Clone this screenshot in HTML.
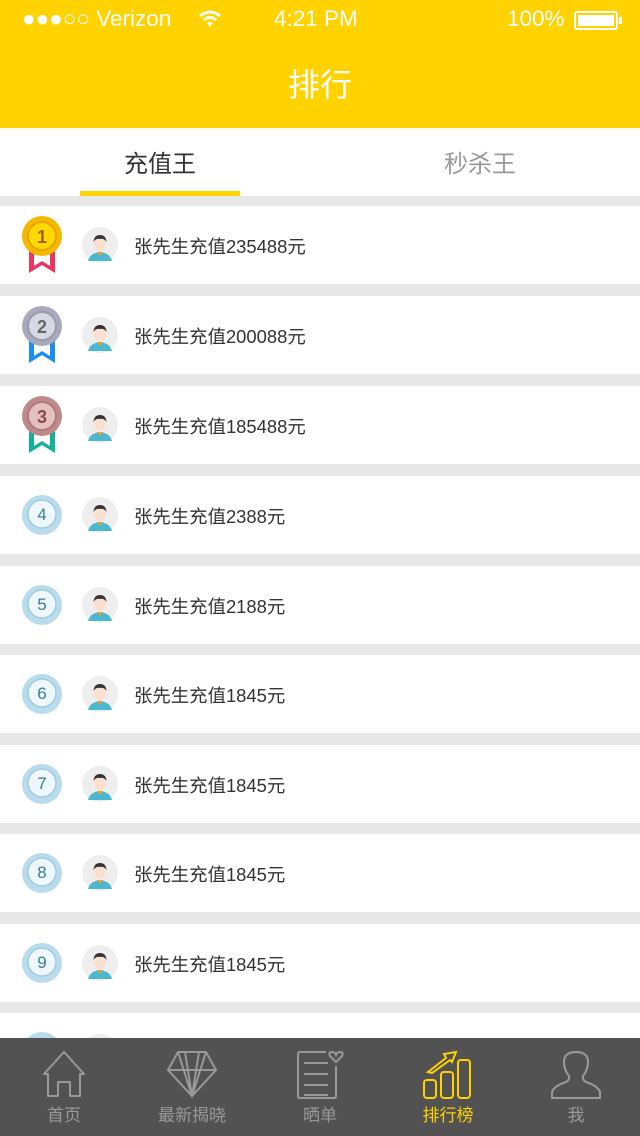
<!DOCTYPE html>
<html><head><meta charset="utf-8"><style>
*{margin:0;padding:0;box-sizing:border-box}
body{width:640px;height:1136px;overflow:hidden;background:#e8e8e8;font-family:"Liberation Sans","Noto Sans CJK SC",sans-serif;position:relative}
.hdr{position:absolute;left:0;top:0;width:640px;height:128px;background:#ffd200;color:#fff}
.sb{position:absolute;top:6px;font-size:22.5px}
.title{position:absolute;top:60px;width:100%;text-align:center;font-size:32px}
.tabs{position:absolute;top:128px;left:0;width:640px;height:68px;background:#fff}
.tab{position:absolute;top:16px;font-size:24px;width:320px;text-align:center}
.ul{position:absolute;left:80px;top:63px;width:160px;height:5px;background:#ffd200}
.row{position:absolute;left:0;width:640px;height:78px;background:#fff}
.txt{position:absolute;left:134px;top:27px;font-size:18.4px;color:#333}
.av{position:absolute;left:82px;top:21px}
.badge{position:absolute;left:21px;top:18px}
.bar{position:absolute;left:0;top:1038px;width:640px;height:98px;background:#525252}
.it{position:absolute;top:63px;width:128px;text-align:center;font-size:17px;color:#999}
.ic{position:absolute;top:12px}
</style></head><body>
<div class="hdr">
 <div class="sb" style="left:22px">●●●○○ Verizon</div>
 <svg style="position:absolute;left:198px;top:9px" width="24" height="20" viewBox="0 0 24 20"><path d="M2 7 Q12 -1 22 7" stroke="#fff" stroke-width="3" fill="none"/><path d="M6 11 Q12 6 18 11" stroke="#fff" stroke-width="3" fill="none"/><path d="M12 18 L9 14 Q12 12 15 14Z" fill="#fff"/></svg>
 <div class="sb" style="left:274px">4:21 PM</div>
 <div class="sb" style="left:507px">100%</div>
 <div style="position:absolute;left:574px;top:11px;width:44px;height:19px;border:2px solid #fff;border-radius:3px;padding:2px"><div style="background:#fff;width:100%;height:100%"></div></div>
 <div style="position:absolute;left:619px;top:17px;width:3px;height:7px;background:#fff"></div>
 <div class="title">排行</div>
</div>
<div class="tabs">
 <div class="tab" style="left:0;color:#333">充值王</div>
 <div class="tab" style="left:320px;color:#999">秒杀王</div>
 <div class="ul"></div>
</div>

<div class="row" style="top:206px">
 <svg class="badge" style="top:10px" width="42" height="58" viewBox="0 0 42 58"><path d="M8 26 L8 57 L21 49 L34 57 L34 26Z" fill="#ee3460"/><path d="M13 30 L13 50 L21 45 L29 50 L29 30Z" fill="#fff"/><circle cx="21" cy="20" r="20" fill="#f5b800"/><circle cx="21" cy="20" r="14" fill="#ffd800" stroke="#e8a400" stroke-width="2"/><text x="21" y="27" font-size="18" font-weight="bold" text-anchor="middle" fill="#a06000" font-family="Liberation Sans">1</text></svg>
 <svg class="av" width="36" height="36"><circle cx="18" cy="18" r="18" fill="#eee"/><path d="M6 34 Q8 26 18 25 Q28 26 30 34Z" fill="#4bb8cf"/><path d="M15 25 L18 29 L21 25Z" fill="#f19b32"/><ellipse cx="18" cy="17" rx="6" ry="7" fill="#fbe0d0"/><path d="M11.5 15 Q12 8 18 8 Q24 8 24.5 15 Q22 11 18 12 Q14 11 11.5 15Z" fill="#333"/></svg>
 <div class="txt">张先生充值235488元</div>
</div>
<div class="row" style="top:296px">
 <svg class="badge" style="top:10px" width="42" height="58" viewBox="0 0 42 58"><path d="M8 26 L8 57 L21 49 L34 57 L34 26Z" fill="#1a8ff0"/><path d="M13 30 L13 50 L21 45 L29 50 L29 30Z" fill="#fff"/><circle cx="21" cy="20" r="20" fill="#a9a9bd"/><circle cx="21" cy="20" r="14" fill="#d8d8e2" stroke="#9a9aaa" stroke-width="2"/><text x="21" y="27" font-size="18" font-weight="bold" text-anchor="middle" fill="#666" font-family="Liberation Sans">2</text></svg>
 <svg class="av" width="36" height="36"><circle cx="18" cy="18" r="18" fill="#eee"/><path d="M6 34 Q8 26 18 25 Q28 26 30 34Z" fill="#4bb8cf"/><path d="M15 25 L18 29 L21 25Z" fill="#f19b32"/><ellipse cx="18" cy="17" rx="6" ry="7" fill="#fbe0d0"/><path d="M11.5 15 Q12 8 18 8 Q24 8 24.5 15 Q22 11 18 12 Q14 11 11.5 15Z" fill="#333"/></svg>
 <div class="txt">张先生充值200088元</div>
</div>
<div class="row" style="top:386px">
 <svg class="badge" style="top:10px" width="42" height="58" viewBox="0 0 42 58"><path d="M8 26 L8 57 L21 49 L34 57 L34 26Z" fill="#13b09a"/><path d="M13 30 L13 50 L21 45 L29 50 L29 30Z" fill="#fff"/><circle cx="21" cy="20" r="20" fill="#c08a8a"/><circle cx="21" cy="20" r="14" fill="#e4c0c0" stroke="#b07a7a" stroke-width="2"/><text x="21" y="27" font-size="18" font-weight="bold" text-anchor="middle" fill="#8a4a4a" font-family="Liberation Sans">3</text></svg>
 <svg class="av" width="36" height="36"><circle cx="18" cy="18" r="18" fill="#eee"/><path d="M6 34 Q8 26 18 25 Q28 26 30 34Z" fill="#4bb8cf"/><path d="M15 25 L18 29 L21 25Z" fill="#f19b32"/><ellipse cx="18" cy="17" rx="6" ry="7" fill="#fbe0d0"/><path d="M11.5 15 Q12 8 18 8 Q24 8 24.5 15 Q22 11 18 12 Q14 11 11.5 15Z" fill="#333"/></svg>
 <div class="txt">张先生充值185488元</div>
</div>

<div class="row" style="top:476px"><svg class="badge" width="42" height="42"><circle cx="21" cy="21" r="20" fill="#b8dcec"/><circle cx="21" cy="20" r="14" fill="#eef7fb" stroke="#9fcbe0" stroke-width="1.5"/><text x="21" y="26" font-size="17" text-anchor="middle" fill="#3a7e96" font-family="Liberation Sans">4</text></svg><svg class="av" width="36" height="36"><circle cx="18" cy="18" r="18" fill="#eee"/><path d="M6 34 Q8 26 18 25 Q28 26 30 34Z" fill="#4bb8cf"/><path d="M15 25 L18 29 L21 25Z" fill="#f19b32"/><ellipse cx="18" cy="17" rx="6" ry="7" fill="#fbe0d0"/><path d="M11.5 15 Q12 8 18 8 Q24 8 24.5 15 Q22 11 18 12 Q14 11 11.5 15Z" fill="#333"/></svg><div class="txt">张先生充值2388元</div></div>
<div class="row" style="top:566px"><svg class="badge" width="42" height="42"><circle cx="21" cy="21" r="20" fill="#b8dcec"/><circle cx="21" cy="20" r="14" fill="#eef7fb" stroke="#9fcbe0" stroke-width="1.5"/><text x="21" y="26" font-size="17" text-anchor="middle" fill="#3a7e96" font-family="Liberation Sans">5</text></svg><svg class="av" width="36" height="36"><circle cx="18" cy="18" r="18" fill="#eee"/><path d="M6 34 Q8 26 18 25 Q28 26 30 34Z" fill="#4bb8cf"/><path d="M15 25 L18 29 L21 25Z" fill="#f19b32"/><ellipse cx="18" cy="17" rx="6" ry="7" fill="#fbe0d0"/><path d="M11.5 15 Q12 8 18 8 Q24 8 24.5 15 Q22 11 18 12 Q14 11 11.5 15Z" fill="#333"/></svg><div class="txt">张先生充值2188元</div></div>
<div class="row" style="top:655px"><svg class="badge" width="42" height="42"><circle cx="21" cy="21" r="20" fill="#b8dcec"/><circle cx="21" cy="20" r="14" fill="#eef7fb" stroke="#9fcbe0" stroke-width="1.5"/><text x="21" y="26" font-size="17" text-anchor="middle" fill="#3a7e96" font-family="Liberation Sans">6</text></svg><svg class="av" width="36" height="36"><circle cx="18" cy="18" r="18" fill="#eee"/><path d="M6 34 Q8 26 18 25 Q28 26 30 34Z" fill="#4bb8cf"/><path d="M15 25 L18 29 L21 25Z" fill="#f19b32"/><ellipse cx="18" cy="17" rx="6" ry="7" fill="#fbe0d0"/><path d="M11.5 15 Q12 8 18 8 Q24 8 24.5 15 Q22 11 18 12 Q14 11 11.5 15Z" fill="#333"/></svg><div class="txt">张先生充值1845元</div></div>
<div class="row" style="top:745px"><svg class="badge" width="42" height="42"><circle cx="21" cy="21" r="20" fill="#b8dcec"/><circle cx="21" cy="20" r="14" fill="#eef7fb" stroke="#9fcbe0" stroke-width="1.5"/><text x="21" y="26" font-size="17" text-anchor="middle" fill="#3a7e96" font-family="Liberation Sans">7</text></svg><svg class="av" width="36" height="36"><circle cx="18" cy="18" r="18" fill="#eee"/><path d="M6 34 Q8 26 18 25 Q28 26 30 34Z" fill="#4bb8cf"/><path d="M15 25 L18 29 L21 25Z" fill="#f19b32"/><ellipse cx="18" cy="17" rx="6" ry="7" fill="#fbe0d0"/><path d="M11.5 15 Q12 8 18 8 Q24 8 24.5 15 Q22 11 18 12 Q14 11 11.5 15Z" fill="#333"/></svg><div class="txt">张先生充值1845元</div></div>
<div class="row" style="top:834px"><svg class="badge" width="42" height="42"><circle cx="21" cy="21" r="20" fill="#b8dcec"/><circle cx="21" cy="20" r="14" fill="#eef7fb" stroke="#9fcbe0" stroke-width="1.5"/><text x="21" y="26" font-size="17" text-anchor="middle" fill="#3a7e96" font-family="Liberation Sans">8</text></svg><svg class="av" width="36" height="36"><circle cx="18" cy="18" r="18" fill="#eee"/><path d="M6 34 Q8 26 18 25 Q28 26 30 34Z" fill="#4bb8cf"/><path d="M15 25 L18 29 L21 25Z" fill="#f19b32"/><ellipse cx="18" cy="17" rx="6" ry="7" fill="#fbe0d0"/><path d="M11.5 15 Q12 8 18 8 Q24 8 24.5 15 Q22 11 18 12 Q14 11 11.5 15Z" fill="#333"/></svg><div class="txt">张先生充值1845元</div></div>
<div class="row" style="top:924px"><svg class="badge" width="42" height="42"><circle cx="21" cy="21" r="20" fill="#b8dcec"/><circle cx="21" cy="20" r="14" fill="#eef7fb" stroke="#9fcbe0" stroke-width="1.5"/><text x="21" y="26" font-size="17" text-anchor="middle" fill="#3a7e96" font-family="Liberation Sans">9</text></svg><svg class="av" width="36" height="36"><circle cx="18" cy="18" r="18" fill="#eee"/><path d="M6 34 Q8 26 18 25 Q28 26 30 34Z" fill="#4bb8cf"/><path d="M15 25 L18 29 L21 25Z" fill="#f19b32"/><ellipse cx="18" cy="17" rx="6" ry="7" fill="#fbe0d0"/><path d="M11.5 15 Q12 8 18 8 Q24 8 24.5 15 Q22 11 18 12 Q14 11 11.5 15Z" fill="#333"/></svg><div class="txt">张先生充值1845元</div></div>
<div class="row" style="top:1013px"><svg class="badge" width="42" height="42"><circle cx="21" cy="21" r="20" fill="#b8dcec"/></svg><svg class="av" width="36" height="36"><circle cx="18" cy="18" r="18" fill="#eee"/></svg></div>

<div class="bar">
 <svg class="ic" style="left:42px" width="44" height="48" viewBox="0 0 44 48" fill="none" stroke="#999" stroke-width="2"><path d="M22 2 L42 24 L38 24 L38 46 L28 46 L28 32 L16 32 L16 46 L6 46 L6 24 L2 24Z" stroke-linejoin="round"/></svg>
 <div class="it" style="left:0">首页</div>
 <svg class="ic" style="left:166px" width="52" height="48" viewBox="0 0 52 48" fill="none" stroke="#999" stroke-width="2"><path d="M2 20 L12 2 L40 2 L50 20 L26 46Z M2 20 L50 20 M12 2 L26 46 L40 2 M19 2 L26 46 L33 2"/></svg>
 <div class="it" style="left:128px">最新揭晓</div>
 <svg class="ic" style="left:296px" width="48" height="50" viewBox="0 0 48 50" fill="none" stroke="#999" stroke-width="2"><path d="M30 2 L4 2 Q2 2 2 4 L2 46 Q2 48 4 48 L38 48 Q40 48 40 46 L40 16"/><path d="M8 13 L32 13 M8 24 L32 24 M8 35 L32 35 M8 45 L32 45"/><path d="M40 12 L34 6 Q32 2 36 2 Q39 2 40 5 Q41 2 44 2 Q48 2 46 6Z"/></svg>
 <div class="it" style="left:256px">晒单</div>
 <svg class="ic" style="left:422px" width="52" height="50" viewBox="0 0 52 50" fill="none" stroke="#ffd200" stroke-width="2"><rect x="2" y="30" width="12" height="18" rx="3"/><rect x="19" y="22" width="12" height="26" rx="3"/><rect x="36" y="10" width="12" height="38" rx="3"/><path d="M6 22 L24 8 L22 4 L34 2 L30 12 L28 10 L10 23Z"/></svg>
 <div class="it" style="left:384px;color:#ffd200">排行榜</div>
 <svg class="ic" style="left:550px" width="52" height="50" viewBox="0 0 52 50" fill="none" stroke="#999" stroke-width="2"><path d="M2 48 L50 48 L50 42 Q48 36 36 32 Q32 30 33 26 Q38 20 38 12 Q38 2 26 2 Q14 2 14 12 Q14 20 19 26 Q20 30 16 32 Q4 36 2 42Z" stroke-linejoin="round"/></svg>
 <div class="it" style="left:512px">我</div>
</div>
</body></html>
